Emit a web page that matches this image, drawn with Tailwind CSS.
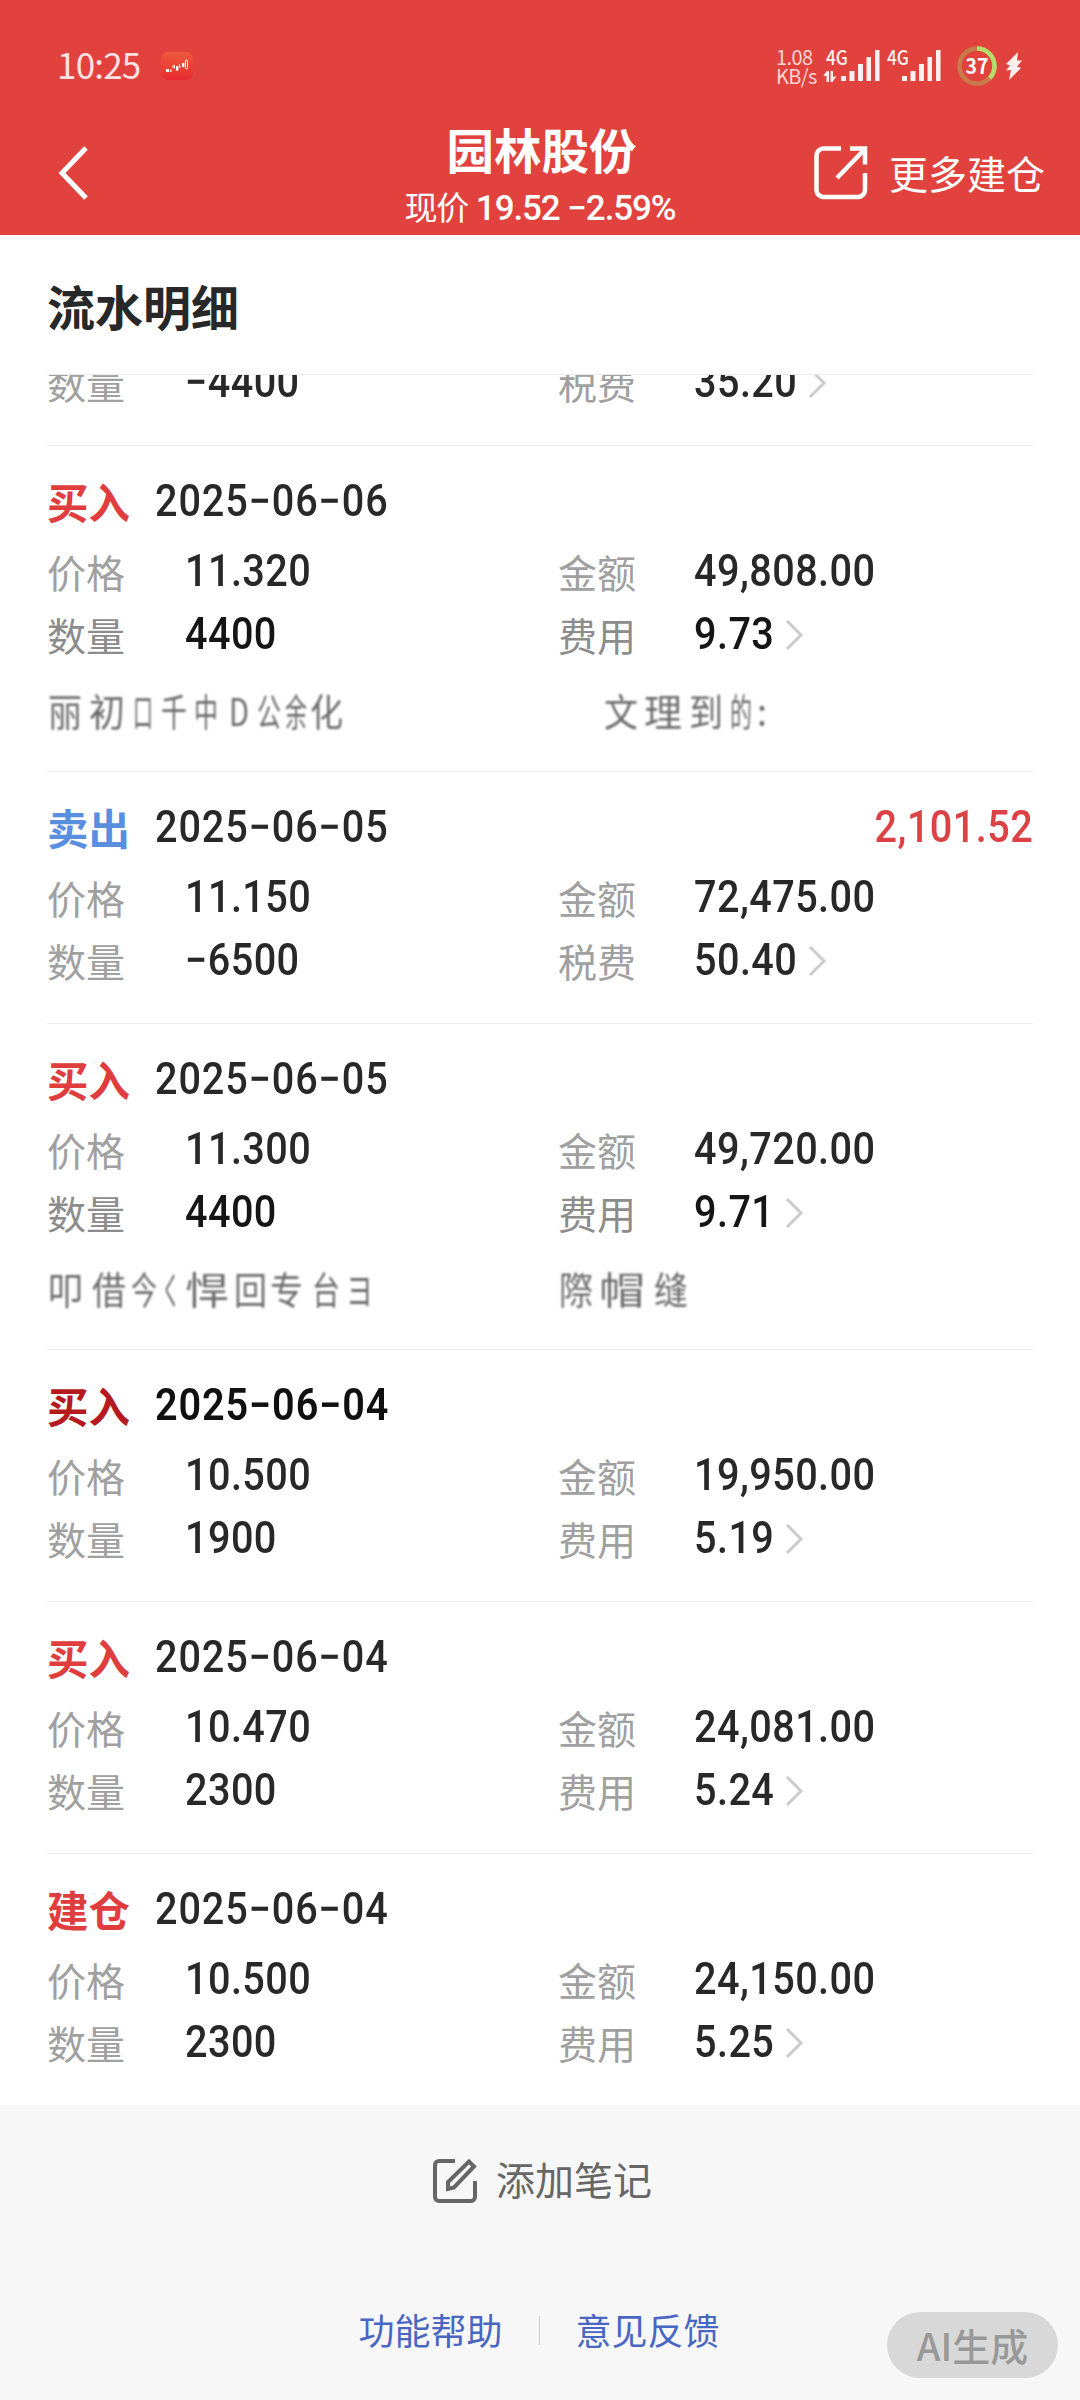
<!DOCTYPE html>
<html lang="zh-CN">
<head>
  <meta charset="UTF-8" />
  <meta name="viewport" content="width=device-width, initial-scale=1.0"/>
  <title>流水明细</title>
  <script src="https://cdn.jsdelivr.net/npm/@tailwindcss/browser@4"></script>
</head>
<body class="w-[1080px] h-[2400px] bg-white overflow-hidden flex flex-col relative font-['Roboto','Noto_Sans_CJK_SC',sans-serif] text-[#282828]">

  <header class="h-[235px] shrink-0 bg-[#e2423d] text-white flex flex-col">
    <!-- status bar -->
    <div class="h-[118px] pt-[14px] pl-[57px] pr-[57px] flex items-center justify-between font-['Noto_Sans_CJK_SC',sans-serif]">
      <div class="flex items-center">
        <span class="text-[35px] leading-[56px] pb-[4px] text-[#ffe0e2] w-[104px] tracking-[-0.8px]">10:25</span>
        <svg class="w-8 h-7" viewBox="0 0 32 28">
          <defs><linearGradient id="app" x1="0" y1="0" x2="0" y2="1"><stop offset="0" stop-color="#ee5a3c"/><stop offset="1" stop-color="#e92a30"/></linearGradient></defs>
          <rect width="32" height="28" rx="7" fill="url(#app)"/>
          <g fill="#fff"><rect x="5" y="17" width="3" height="3"/><rect x="15" y="14" width="2.4" height="4.5"/><rect x="21" y="11" width="2.4" height="4"/></g>
          <g fill="none" stroke="#fff" stroke-width="0.9"><path d="M9 18.500l1 1.500v-3M12 16v-2.500h1.500v3M18.500 12v3h1.500"/><rect x="24.500" y="8" width="2" height="9" rx="1"/></g>
        </svg>
      </div>
      <div class="flex items-center">
        <div class="w-[47px] text-[20px] leading-[19px] text-[#ffd5d6] tracking-[-0.6px] whitespace-nowrap">1.08<br>KB/s</div>
        <svg class="w-[118px] h-[52px] overflow-visible" viewBox="822 40 118 52" fill="#fff0f0">
          <g font-family="Noto Sans CJK SC" font-size="19.500" font-weight="500">
            <text x="825" y="65" textLength="22" lengthAdjust="spacingAndGlyphs">4G</text>
            <text x="886" y="65" textLength="22" lengthAdjust="spacingAndGlyphs">4G</text>
          </g>
          <path d="M822 76l4-5h2v11h-2.500v-6zM829.500 71h2.500v6l3.500-1-4 6h-2z"/>
          <path d="M840 76h5v5h-5zM848.500 71h5v10h-5zM857 64h5v17h-5zM865.500 57h4.500v24h-4.500zM874 50h4.500v31h-4.500z"/>
          <path d="M901 76h5v5h-5zM909.500 71h5v10h-5zM918 64h5v17h-5zM926.500 57h4.500v24h-4.500zM935 50h4.500v31h-4.500z"/>
        </svg>
        <svg class="w-10 h-10 ml-4" viewBox="0 0 40 40">
          <circle cx="20" cy="20" r="17.500" fill="none" stroke="#c97a4b" stroke-width="4.500"/>
          <circle cx="20" cy="20" r="17.500" fill="none" stroke="#b4dc69" stroke-width="4.500" pathLength="100" stroke-dasharray="37 63" transform="rotate(-90 20 20)"/>
          <text x="20" y="27.500" text-anchor="middle" font-size="21" font-weight="700" fill="#fff" font-family="Noto Sans CJK SC" textLength="23" lengthAdjust="spacingAndGlyphs">37</text>
        </svg>
        <svg class="w-[18px] h-7 ml-2" viewBox="0 0 18 28" fill="#fff0f0"><path d="M13 0L1 12l4 1.500-4 5 5-.5L4 28l12-12-4-1.500 5-6h-5z"/></svg>
      </div>
    </div>

    <!-- title bar -->
    <div class="h-[117px] flex">
      <div class="w-[360px] pl-[58px] pt-[28px]">
        <svg class="w-8 h-[54px]" viewBox="0 0 32 54" fill="none" stroke="#fff" stroke-width="5"><path d="M28 2L4 27l24 25"/></svg>
      </div>
      <div class="w-[360px] flex flex-col items-center whitespace-nowrap">
        <h1 class="text-[47.5px] leading-[70px] font-bold pl-[3px]">园林股份</h1>
        <p class="text-[35px] leading-[42px] tracking-[-1.1px] font-medium"><span class="font-normal text-[33px]">现价</span> 19.52 −2.59%</p>
      </div>
      <div class="w-[360px] pl-[94px] pt-[26px] flex items-start gap-[21px]">
        <svg class="w-[54px] h-[56px] shrink-0" viewBox="0 0 54 56" fill="none" stroke="#fff" stroke-width="4.500">
          <path d="M27 4.500H9.500a7 7 0 0 0-7 7V46a7 7 0 0 0 7 7H44a7 7 0 0 0 7-7V29M36 4.500h15v16M50 6L23 34"/>
        </svg>
        <span class="text-[39px] leading-[64px] whitespace-nowrap">更多建仓</span>
      </div>
    </div>
  </header>

  <main class="h-[1870px] shrink-0 px-[47px] flex flex-col">
    <h2 class="h-[139px] shrink-0 text-[48px] leading-[149px] font-bold">流水明细</h2>
    <div class="border-t border-[#ebebeb] flex-1 overflow-hidden flex flex-col justify-end" id="list"></div>
  </main>

  <footer class="flex-1 bg-[#f7f7f7] flex flex-col items-center">
    <div class="mt-[51px] h-[50px] flex items-center gap-[18px] pl-[4px] text-[39px] text-[#666]">
      <svg class="w-[46px] h-[46px]" viewBox="0 0 46 46" fill="none" stroke="#666" stroke-width="4">
        <path d="M23 3H7a4 4 0 0 0-4 4v32a4 4 0 0 0 4 4h32a4 4 0 0 0 4-4V23"/>
        <path d="M16 31v-7L37 3.500l5 5L22 29.500z"/>
      </svg>
      <span class="pt-[3px]">添加笔记</span>
    </div>
    <div class="mt-[99px] h-[50px] flex items-center text-[36px] text-[#4a66c3] -ml-[2px]">
      <span class="pt-[6px]">功能帮助</span>
      <i class="w-px h-[29px] bg-[#ccc] mx-[36px]"></i>
      <span class="pt-[6px]">意见反馈</span>
    </div>
  </footer>

  <div class="absolute left-[887px] top-[2312px] w-[171px] h-[66px] rounded-full bg-[#d8d8d8] text-[#989898] text-[38px] font-medium leading-[66px] text-center font-['Noto_Sans_CJK_SC',sans-serif]">AI生成</div>

  <script>
    const red = 'text-[#e03e3e]', blue = 'text-[#5a8fe0]', dark = 'text-[#b51a20]';
    // notes: [character, x, width]
    const note1 = [['丽', 1, 34], ['初', 42, 36], ['口', 86, 20], ['千', 114, 26], ['中', 147, 24], ['D', 182, 20], ['公', 210, 24], ['余', 238, 22], ['化', 263, 33],
                   ['文', 557, 34], ['理', 597, 38], ['到', 642, 34], ['的', 683, 22], [':', 710, 10]];
    const note2 = [['叩', 1, 35], ['借', 45, 34], ['今', 84, 26], ['く', 115, 18], ['悍', 138, 44], ['回', 187, 33], ['专', 223, 33], ['台', 265, 28], ['ヨ', 299, 27],
                   ['際', 512, 34], ['帽', 552, 46], ['缝', 607, 34]];
    const rows = [
      { date: '', qty: '−4400', feeName: '税费', fee: '35.20', partial: true },
      { type: '买入', color: red, date: '2025−06−06', price: '11.320', amount: '49,808.00', qty: '4400', feeName: '费用', fee: '9.73', note: note1, soft: true },
      { type: '卖出', color: blue, date: '2025−06−05', price: '11.150', amount: '72,475.00', qty: '−6500', feeName: '税费', fee: '50.40', profit: '2,101.52' },
      { type: '买入', color: red, date: '2025−06−05', price: '11.300', amount: '49,720.00', qty: '4400', feeName: '费用', fee: '9.71', note: note2, soft: true },
      { type: '买入', color: dark, date: '2025−06−04', price: '10.500', amount: '19,950.00', qty: '1900', feeName: '费用', fee: '5.19', bold: true },
      { type: '买入', color: red, date: '2025−06−04', price: '10.470', amount: '24,081.00', qty: '2300', feeName: '费用', fee: '5.24' },
      { type: '建仓', color: red, date: '2025−06−04', price: '10.500', amount: '24,150.00', qty: '2300', feeName: '费用', fee: '5.25', last: true },
    ];
    const label = (t, soft) => `<span class="${soft ? 'text-[#8c8c8c]' : 'text-[#a0a0a0]'} text-[39px] pt-[4px]">${t}</span>`;
    const value = (t, soft) => `<span class="${soft ? 'text-[#151515]' : 'text-[#282828]'} text-[44px] font-medium tracking-[0.5px] scale-x-90 origin-left">${t}</span>`;

    document.getElementById('list').innerHTML = rows.map(r => `
      <section class="shrink-0 ${r.partial ? 'h-[96px]' : r.note ? 'h-[326px] pt-[21px]' : r.last ? 'h-[251px] pt-[21px]' : 'h-[252px] pt-[21px]'} ${r.last ? '' : 'border-b border-[#ebebeb]'}">
        ${r.partial ? '' : `<div class="h-[72px] flex text-[44px] leading-[68px] tracking-[1px] ${r.bold ? 'font-semibold text-[#101010]' : 'font-medium'}">
          <span class="w-[108px] text-[41.5px] leading-[75px] tracking-normal font-bold ${r.color}">${r.type}</span>
          <span class="scale-x-90 origin-left">${r.date}</span>
          ${r.profit ? `<span class="ml-auto tracking-[0.5px] text-[#dc4146] scale-x-90 origin-right">${r.profit}</span>` : ''}
        </div>
        <div class="h-[63px] grid grid-cols-[138px_373px_136px_1fr] leading-[65px]">
          ${label('价格')}${value(r.price)}${label('金额')}${value(r.amount)}
        </div>`}
        <div class="h-[63px] grid grid-cols-[138px_373px_136px_1fr] leading-[65px]">
          ${label('数量', r.soft)}${value(r.qty, r.soft)}${label(r.feeName, r.soft)}
          <div class="flex items-center h-[65px]">${value(r.fee, r.soft)}
            <svg class="w-[20px] h-[32px] ${r.fee.length > 4 ? '-ml-[1px]' : 'ml-[2px]'}" viewBox="0 0 20 32" fill="none" stroke="#ccc" stroke-width="3"><path d="M2 2l14 14L2 30"/></svg>
          </div>
        </div>
        ${r.note ? `<svg class="w-full h-[76px] overflow-visible blur-[0.8px]" fill="#6b6b6b" font-family="Noto Sans CJK SC" font-size="38">
          ${r.note.map(([c, x, w]) => `<text x="${x}" y="61" textLength="${w}" lengthAdjust="spacingAndGlyphs">${c}</text>`).join('')}
        </svg>` : ''}
      </section>`).join('');
  </script>
</body>
</html>
